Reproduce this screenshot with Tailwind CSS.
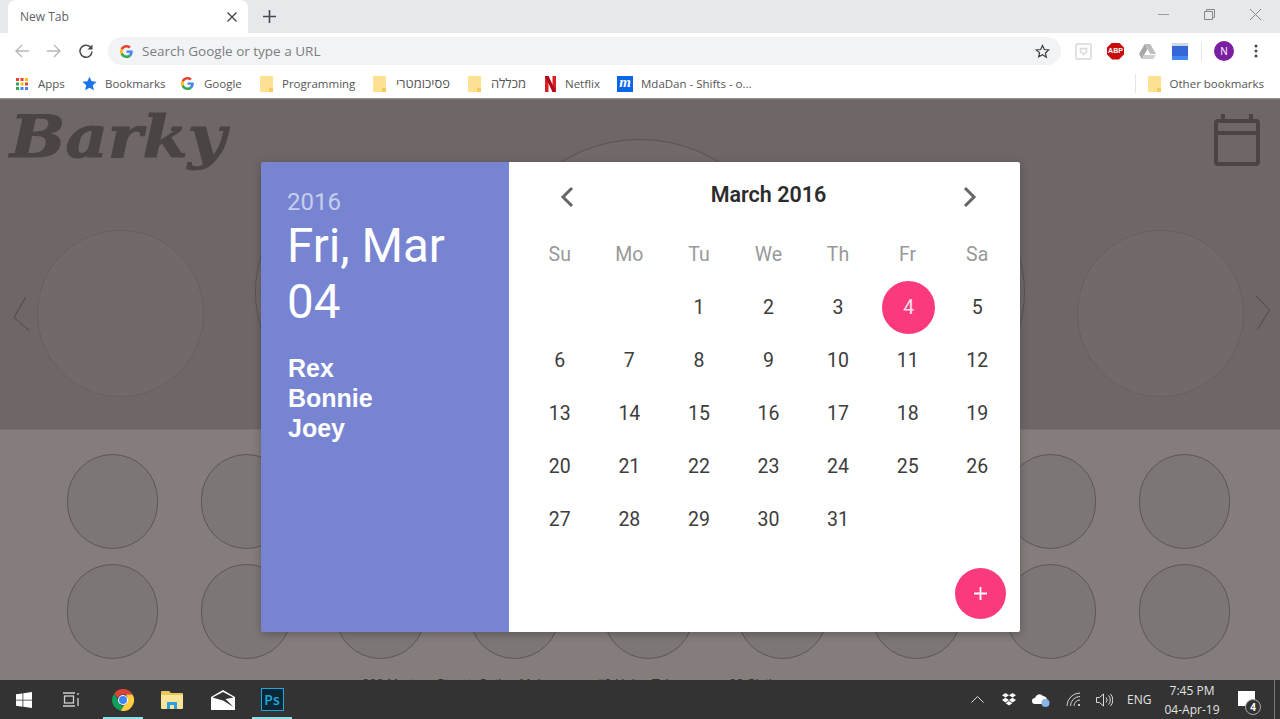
<!DOCTYPE html>
<html lang="en">
  <head>
    <meta charset="UTF-8" />
    <meta name="viewport" content="width=device-width, initial-scale=1.0" />
    <script src="https://cdn.jsdelivr.net/npm/@tailwindcss/browser@4"></script>
    <title>Barky</title>
  </head>
  <body class="w-[1280px] h-[719px] overflow-hidden flex flex-col bg-[#333] font-['Open_Sans','Liberation_Sans',sans-serif]">
    <svg class="hidden">
      <symbol id="g-logo" viewBox="0 0 48 48">
        <path fill="#EA4335" d="M24 9.5c3.54 0 6.71 1.22 9.21 3.6l6.85-6.85C35.9 2.38 30.47 0 24 0 14.62 0 6.51 5.38 2.56 13.22l7.98 6.19C12.43 13.72 17.74 9.5 24 9.5z" />
        <path fill="#4285F4" d="M46.98 24.55c0-1.57-.15-3.09-.38-4.55H24v9.02h12.94c-.58 2.96-2.26 5.48-4.78 7.18l7.73 6c4.51-4.18 7.09-10.36 7.09-17.65z" />
        <path fill="#FBBC05" d="M10.53 28.59c-.48-1.45-.76-2.99-.76-4.59s.27-3.14.76-4.59l-7.98-6.19C.92 16.46 0 20.12 0 24c0 3.88.92 7.54 2.56 10.78l7.97-6.19z" />
        <path fill="#34A853" d="M24 48c6.48 0 11.93-2.13 15.89-5.81l-7.73-6c-2.15 1.45-4.92 2.3-8.16 2.3-6.26 0-11.57-4.22-13.47-9.91l-7.98 6.19C6.51 42.62 14.62 48 24 48z" />
      </symbol>
      <symbol id="folder" viewBox="0 0 13 16">
        <path fill="#fde293" d="M1 0h11a1 1 0 0 1 1 1v14a1 1 0 0 1-1 1H1a1 1 0 0 1-1-1V1a1 1 0 0 1 1-1z" />
        <path fill="#f6ca5c" d="M9 12h4v3a1 1 0 0 1-1 1H9z" />
      </symbol>
    </svg>

    <!-- tab strip -->
    <div class="h-[33px] bg-[#e6e9ec] flex items-end shrink-0 relative">
      <div class="ml-[8px] w-[240px] h-[33px] bg-white rounded-t-[8px] flex items-center pl-[12px] pr-[11px] justify-between">
        <span class="text-[12px] text-[#5f6368]">New Tab</span>
        <svg width="10" height="10" viewBox="0 0 10 10" stroke="#45484c" stroke-width="1.4"><path d="M0.5 0.5l9 9M9.5 0.5l-9 9" /></svg>
      </div>
      <svg class="ml-[15px] mb-[10px]" width="13" height="13" viewBox="0 0 13 13" stroke="#45484c" stroke-width="1.6"><path d="M6.5 0v13M0 6.5h13" /></svg>
      <div class="ml-auto flex items-center h-[33px] pb-[5px] text-[#8a8d90]">
        <svg width="11" height="11" viewBox="0 0 11 11" stroke="#9a9da0"><path d="M0 5.5h11" /></svg>
        <svg class="ml-[35px]" width="11" height="11" viewBox="0 0 11 11" stroke="#85888b" fill="none"><path d="M0.5 2.5h8v8h-8zM2.5 2.5v-2h8v8h-2" /></svg>
        <svg class="ml-[35px] mr-[19px]" width="11" height="11" viewBox="0 0 11 11" stroke="#85888b"><path d="M0 0l11 11M11 0l-11 11" /></svg>
      </div>
    </div>

    <!-- toolbar -->
    <div class="h-[36px] bg-white flex items-center shrink-0">
      <svg class="ml-[15px]" width="14" height="14" viewBox="0 0 14 14" fill="none" stroke="#b5b8bb" stroke-width="1.4"><path d="M14 7H1M7 1L1 7l6 6" /></svg>
      <svg class="ml-[18px]" width="14" height="14" viewBox="0 0 14 14" fill="none" stroke="#b5b8bb" stroke-width="1.4"><path d="M0 7h13M7 1l6 6-6 6" /></svg>
      <svg class="ml-[18px]" width="14" height="14" viewBox="0 0 14 14" fill="none" stroke="#45484c" stroke-width="1.5"><path d="M12.2 4.2A6 6 0 1 0 13 7.5" /><path fill="#45484c" stroke="none" d="M13.5 0.5v5h-5z" /></svg>
      <div class="ml-[15px] w-[953px] h-[28px] bg-[#f1f3f4] rounded-full flex items-center pl-[12px] pr-[11px]">
        <svg width="13" height="13"><use href="#g-logo" /></svg>
        <span class="ml-[9px] text-[13.500px] text-[#7b7e82]">Search Google or type a URL</span>
        <svg class="ml-auto" width="15" height="15" viewBox="0 0 24 24" fill="none" stroke="#3c4043" stroke-width="2"><path d="M12 2.5l2.9 6.3 6.9.8-5.1 4.7 1.4 6.8L12 17.1l-6.1 3.5 1.4-6.8L2.200 9.600l6.900-.8z" /></svg>
      </div>
      <svg class="ml-[14px]" width="17" height="17" viewBox="0 0 17 17" fill="none" stroke="#d5d8da" stroke-width="1.5"><rect x="1" y="1" width="15" height="15" rx="1" /><path d="M5.500 5.500h6v3.500l-3 2.500-3-2.500z" /></svg>
      <div class="ml-[15px] w-[17px] h-[17px] bg-[#c80d0d] [clip-path:polygon(30%_0,70%_0,100%_30%,100%_70%,70%_100%,30%_100%,0_70%,0_30%)] flex items-center justify-center text-white text-[7px] font-bold font-['Liberation_Sans']">ABP</div>
      <svg class="ml-[15px]" width="17" height="15" viewBox="0 0 17 15"><path fill="#bdbdbd" d="M5.700 0h5.600l5.700 10H11.400z" /><path fill="#a8a8a8" d="M5.700 0l2.800 5L2.800 15 0 10z" /><path fill="#d0d0d0" d="M5 11h12l-2.800 4H2.800z" /></svg>
      <svg class="ml-[16px]" width="16" height="17" viewBox="0 0 16 17"><rect width="16" height="17" rx="1" fill="#3367d6" /><rect width="16" height="3" fill="#cfd8e6" /><rect y="13" width="16" height="4" fill="#4285f4" /></svg>
      <div class="ml-[13px] w-px h-[19px] bg-[#e3e5e7]"></div>
      <div class="ml-[12px] w-[20px] h-[20px] rounded-full bg-[#7b1fa2] text-white text-[10px] flex items-center justify-center">N</div>
      <svg class="ml-[20px]" width="4" height="14" viewBox="0 0 4 14" fill="#45484c"><circle cx="2" cy="2" r="1.500" /><circle cx="2" cy="7" r="1.500" /><circle cx="2" cy="12" r="1.500" /></svg>
    </div>

    <!-- bookmarks bar -->
    <div class="h-[30px] bg-white border-b border-b-[#8e8a8a] flex items-center shrink-0 text-[11.500px] text-[#555]">
      <svg class="ml-[16px]" width="12" height="12" viewBox="0 0 12 12">
        <rect width="3" height="3" fill="#ea4335" /><rect x="4.500" width="3" height="3" fill="#ea4335" /><rect x="9" width="3" height="3" fill="#fbbc05" />
        <rect y="4.500" width="3" height="3" fill="#34a853" /><rect x="4.500" y="4.500" width="3" height="3" fill="#fbbc05" /><rect x="9" y="4.500" width="3" height="3" fill="#ea4335" />
        <rect y="9" width="3" height="3" fill="#34a853" /><rect x="4.500" y="9" width="3" height="3" fill="#4285f4" /><rect x="9" y="9" width="3" height="3" fill="#4285f4" />
      </svg>
      <span class="ml-[10px] w-[27px]">Apps</span>
      <svg class="ml-[17px]" width="15" height="15" viewBox="0 0 24 24" fill="#1a73e8"><path d="M12 1l3.300 7.400 8 .9-6 5.400 1.700 7.900-7-4-7 4 1.700-7.900-6-5.400 8-.9z" /></svg>
      <span class="ml-[8px] w-[58px] whitespace-nowrap">Bookmarks</span>
      <svg class="ml-[18px]" width="13" height="13"><use href="#g-logo" /></svg>
      <span class="ml-[10px] w-[38px]">Google</span>
      <svg class="ml-[18px]" width="13" height="16"><use href="#folder" /></svg>
      <span class="ml-[9px] w-[73px]">Programming</span>
      <svg class="ml-[18px]" width="13" height="16"><use href="#folder" /></svg>
      <span class="ml-[9px] w-[55px] whitespace-nowrap text-right text-[13px]" dir="rtl">פסיכומטרי</span>
      <svg class="ml-[18px]" width="13" height="16"><use href="#folder" /></svg>
      <span class="ml-[9px] w-[36px] whitespace-nowrap text-[13px]" dir="rtl">מכללה</span>
      <svg class="ml-[19px]" width="11" height="16" viewBox="0 0 11 16"><path fill="#d81f26" d="M0 0h3.500v16L0 16zM7.500 0H11v16l-3.500 0z" /><path fill="#b00710" d="M0 0h3.500l7.500 16H7.500z" /></svg>
      <span class="ml-[9px] w-[35px]">Netflix</span>
      <div class="ml-[17px] w-[16px] h-[16px] bg-[#0a66e6] flex items-center justify-center text-white text-[15px] leading-none italic font-bold font-['Liberation_Serif',serif] pb-[3px]">m</div>
      <span class="ml-[8px] whitespace-nowrap">MdaDan - Shifts - o...</span>
      <div class="ml-auto w-px h-[19px] bg-[#e3e5e7]"></div>
      <svg class="ml-[12px]" width="13" height="16"><use href="#folder" /></svg>
      <span class="ml-[9px] mr-[16px]">Other bookmarks</span>
    </div>

    <!-- dimmed page -->
    <main class="relative h-[581px] shrink-0 overflow-hidden bg-[#857c7c]">
      <section class="relative h-[330px] bg-[#6f6767] border-t border-t-[#7d7676] overflow-hidden flex items-start pl-[37px]">
        <div class="w-[167px] h-[167px] shrink-0 mt-[130px] rounded-full border border-[#666060] bg-[#726a6a]"></div>
        <div class="ml-[51px] w-[230px] h-[230px] shrink-0 mt-[77px] rounded-full border border-[#585353] bg-[#726a6a]"></div>
        <div class="ml-[5px] w-[300px] h-[300px] shrink-0 mt-[39px] rounded-full border border-[#585353] bg-[#726a6a]"></div>
        <div class="ml-[5px] w-[230px] h-[230px] shrink-0 mt-[77px] rounded-full border border-[#585353] bg-[#726a6a]"></div>
        <div class="ml-[52px] w-[167px] h-[167px] shrink-0 mt-[130px] rounded-full border border-[#666060] bg-[#726a6a]"></div>
        <span class="absolute left-[10px] top-[5px] origin-left scale-x-[1.13] text-[58px] leading-[64px] font-bold italic text-[#4a4444] [-webkit-text-stroke:1px_#4a4444] font-['DejaVu_Serif',serif]">Barky</span>
        <svg class="absolute left-[1214px] top-[14px]" width="46" height="52" viewBox="0 0 46 52" fill="none" stroke="#4a4444" stroke-width="4"><rect x="2" y="7" width="42" height="43" rx="2" /><path d="M2 19h42" /><path d="M9 0v7M37 0v7" /></svg>
        <svg class="absolute left-[13px] top-[196px]" width="18" height="36" viewBox="0 0 18 36" fill="none" stroke="#4f4949"><path d="M12.700 1L1 21.500 16 34.500" /></svg>
        <svg class="absolute left-[1255px] top-[195px]" width="16" height="36" viewBox="0 0 16 36" fill="none" stroke="#4f4949"><path d="M1 1l13.500 14L2 35" /></svg>
      </section>
      <section class="pt-[24px] pl-[67px] border-t border-t-[#7a7272] grid grid-cols-[repeat(9,91px)] gap-x-[43px] gap-y-[15px]">
        <div class="h-[95px] rounded-full border border-[#5c5757] bg-[#7c7675]"></div>
        <div class="h-[95px] rounded-full border border-[#5c5757] bg-[#7c7675]"></div>
        <div class="h-[95px] rounded-full border border-[#5c5757] bg-[#7c7675]"></div>
        <div class="h-[95px] rounded-full border border-[#5c5757] bg-[#7c7675]"></div>
        <div class="h-[95px] rounded-full border border-[#5c5757] bg-[#7c7675]"></div>
        <div class="h-[95px] rounded-full border border-[#5c5757] bg-[#7c7675]"></div>
        <div class="h-[95px] rounded-full border border-[#5c5757] bg-[#7c7675]"></div>
        <div class="h-[95px] rounded-full border border-[#5c5757] bg-[#7c7675]"></div>
        <div class="h-[95px] rounded-full border border-[#5c5757] bg-[#7c7675]"></div>
        <div class="h-[95px] rounded-full border border-[#5c5757] bg-[#7c7675]"></div>
        <div class="h-[95px] rounded-full border border-[#5c5757] bg-[#7c7675]"></div>
        <div class="h-[95px] rounded-full border border-[#5c5757] bg-[#7c7675]"></div>
        <div class="h-[95px] rounded-full border border-[#5c5757] bg-[#7c7675]"></div>
        <div class="h-[95px] rounded-full border border-[#5c5757] bg-[#7c7675]"></div>
        <div class="h-[95px] rounded-full border border-[#5c5757] bg-[#7c7675]"></div>
        <div class="h-[95px] rounded-full border border-[#5c5757] bg-[#7c7675]"></div>
        <div class="h-[95px] rounded-full border border-[#5c5757] bg-[#7c7675]"></div>
        <div class="h-[95px] rounded-full border border-[#5c5757] bg-[#7c7675]"></div>
      </section>
      <div class="flex mt-[17px] pl-[362px] text-[13px] leading-[16px] text-[#333] whitespace-nowrap font-['Liberation_Sans',sans-serif]">
        <span class="w-[235px]">222 Mystery Street, Cutler, Maine</span>
        <span class="w-[132px]">#2 Haley Tokyo</span>
        <span>20 Sixth</span>
      </div>

      <!-- date picker -->
      <div class="absolute left-[261px] top-[63px] w-[759px] h-[470px] rounded-[2px] overflow-hidden flex shadow-[0_2px_8px_rgba(0,0,0,0.25)] font-['Roboto',sans-serif]">
        <div class="w-[248px] bg-[#7784d2] pl-[26px] pt-[25px] text-white">
          <div class="text-[24px] leading-[30px] text-white/60">2016</div>
          <div class="text-[47.500px] leading-[56px] mt-[1px]">Fri, Mar<br />04</div>
          <div class="mt-[23px] text-[25px] leading-[30px] font-bold font-['Liberation_Sans',sans-serif] pl-px">Rex<br />Bonnie<br />Joey</div>
        </div>
        <div class="relative w-[511px] bg-white pl-[16px]">
          <div class="w-[488px] h-[66px] flex items-center justify-between pl-[35px] pr-[36px]">
            <svg class="relative top-[2px]" width="14" height="22" viewBox="0 0 14 22" fill="none" stroke="#666" stroke-width="3"><path d="M12 2L3 11l9 9" /></svg>
            <span class="text-[21.500px] font-semibold text-[#2c2c2c]">March 2016</span>
            <svg class="relative top-[2px]" width="14" height="22" viewBox="0 0 14 22" fill="none" stroke="#666" stroke-width="3"><path d="M2 2l9 9-9 9" /></svg>
          </div>
          <div class="w-[487px] grid grid-cols-7 auto-rows-[53px] place-items-center text-[19.500px] text-[#3d3d3d] leading-[26px]">
            <span class="text-[#999]">Su</span><span class="text-[#999]">Mo</span><span class="text-[#999]">Tu</span><span class="text-[#999]">We</span><span class="text-[#999]">Th</span><span class="text-[#999]">Fr</span><span class="text-[#999]">Sa</span>
            <span></span><span></span><span>1</span><span>2</span><span>3</span>
            <span class="relative left-px w-[53px] h-[53px] rounded-full bg-[#fb3a7e] text-white/85 flex items-center justify-center">4</span>
            <span>5</span>
            <span>6</span><span>7</span><span>8</span><span>9</span><span>10</span><span>11</span><span>12</span>
            <span>13</span><span>14</span><span>15</span><span>16</span><span>17</span><span>18</span><span>19</span>
            <span>20</span><span>21</span><span>22</span><span>23</span><span>24</span><span>25</span><span>26</span>
            <span>27</span><span>28</span><span>29</span><span>30</span><span>31</span>
          </div>
          <div class="absolute right-[14px] bottom-[13px] w-[51px] h-[51px] rounded-full bg-[#fb3a7e] flex items-center justify-center">
            <svg width="13" height="13" viewBox="0 0 13 13" stroke="#fff" stroke-width="1.800"><path d="M6.500 0v13M0 6.500h13" /></svg>
          </div>
        </div>
      </div>
    </main>

    <!-- windows taskbar -->
    <footer class="relative z-10 h-[39px] bg-[#333] flex items-center shrink-0 text-[#e2e2e2] text-[12px]">
      <svg class="ml-[16px]" width="16" height="16" viewBox="0 0 16 16" fill="#fff"><path d="M0 2.300l6.500-.9v6.300H0zM7.300 1.300L16 0v7.700H7.300zM0 8.500h6.500v6.200L0 13.800zM7.300 8.500H16V16l-8.700-1.300z" /></svg>
      <svg class="ml-[30px]" width="17" height="15" viewBox="0 0 17 15" fill="none" stroke="#cfcfcf" stroke-width="1.300"><rect x="2.500" y="4" width="9" height="7" /><path d="M1 1h12M1 14h12M16 1v2M16 6v8" /></svg>
      <div class="relative ml-[24px] h-[39px] w-[40px] flex items-center justify-center">
        <svg width="22" height="22" viewBox="0 0 22 22">
          <path fill="#db4437" d="M11 0a11 11 0 0 1 9.530 5.500H11a5.500 5.500 0 0 0-5.200 3.700L2.300 4.400A11 11 0 0 1 11 0z" />
          <path fill="#0f9d58" d="M2.300 4.400l4.600 8A5 5 0 0 0 12 16.400L8.800 21.800A11 11 0 0 1 2.300 4.400z" />
          <path fill="#ffcd40" d="M20.530 5.500A11 11 0 0 1 8.800 21.800l4.700-8.100a5.500 5.500 0 0 0 .2-8.200z" />
          <circle cx="11" cy="11" r="5" fill="#fff" /><circle cx="11" cy="11" r="4" fill="#4285f4" />
        </svg>
        <div class="absolute bottom-0 inset-x-0 h-[2px] bg-[#8fdfe6]"></div>
      </div>
      <svg class="ml-[18px]" width="22" height="19" viewBox="0 0 22 19"><path fill="#e8c65c" d="M0 2a1 1 0 0 1 1-1h7l2 2h11a1 1 0 0 1 1 1v2H0z" /><path fill="#fbe59a" d="M0 5h22v13a1 1 0 0 1-1 1H1a1 1 0 0 1-1-1z" /><path fill="#2f9fe0" d="M6 12h10v7h-3v-4H9v4H6z" /></svg>
      <svg class="ml-[28px]" width="24" height="20" viewBox="0 0 24 20"><path fill="#fff" d="M12 0l12 7v13H0V7z" /><path fill="#333" d="M1.500 7.500L12 2l10.500 5.500-8 1.500 8 8L12 10.500z" /></svg>
      <div class="relative ml-[17px] h-[39px] w-[40px] flex items-center justify-center">
        <div class="w-[23px] h-[23px] bg-[#0b2636] border border-[#19a9dc] text-[#19a9dc] text-[14px] leading-none font-semibold flex items-center justify-center">Ps</div>
        <div class="absolute bottom-0 inset-x-0 h-[2px] bg-[#8fdfe6]"></div>
      </div>
      <svg class="ml-[679px]" width="13" height="7" viewBox="0 0 13 7" fill="none" stroke="#ddd"><path d="M0.500 6.500l6-6 6 6" /></svg>
      <svg class="ml-[18px]" width="14" height="13" viewBox="0 0 14 13" fill="#fff"><path d="M3.500 0L7 2.300 3.500 4.600 0 2.300zM10.500 0L14 2.300l-3.500 2.300L7 2.300zM3.500 4.800L7 7.100 3.500 9.400 0 7.100zM10.500 4.800L14 7.100l-3.500 2.300L7 7.100zM7 8l3.300 2.200L7 12.500l-3.300-2.300z" /></svg>
      <svg class="ml-[16px]" width="18" height="14" viewBox="0 0 18 14"><path fill="#fff" d="M3 11a3 3 0 0 1 0-6 4.500 4.500 0 0 1 8-2 4 4 0 0 1 4 5l-4 3z" /><circle cx="13.500" cy="10" r="4" fill="#8ab4e8" /></svg>
      <svg class="ml-[16px]" width="15" height="15" viewBox="0 0 15 15" fill="none" stroke="#cfcfcf"><path d="M1 14A13 13 0 0 1 14 1M4.500 14A9.500 9.500 0 0 1 14 4.500M8 14a6 6 0 0 1 6-6" /><circle cx="13" cy="13" r="1" fill="#fff" stroke="none" /></svg>
      <svg class="ml-[15px]" width="17" height="14" viewBox="0 0 17 14" fill="none" stroke="#dcdcdc"><path d="M0.500 4.500h3l4-3.500v12l-4-3.500h-3zM10 4.500a3.500 3.500 0 0 1 0 5M12.500 2.500a6.500 6.500 0 0 1 0 9M14.500 1a9 9 0 0 1 0 12" /></svg>
      <span class="ml-[14px] w-[26px]">ENG</span>
      <div class="ml-[8px] w-[62px] text-center leading-[19px]"><div>7:45 PM</div><div>04-Apr-19</div></div>
      <div class="relative ml-[15px] w-[17px] h-[15px] bg-white mb-[3px]">
        <div class="absolute left-[7px] top-[8px] w-[16px] h-[16px] rounded-full bg-[#333] border border-[#aaa] text-white text-[10px] leading-none font-bold flex items-center justify-center">4</div>
      </div>
      <div class="absolute left-[1274px] top-0 h-[39px] w-px bg-[#777]"></div>
    </footer>
  </body>
</html>
